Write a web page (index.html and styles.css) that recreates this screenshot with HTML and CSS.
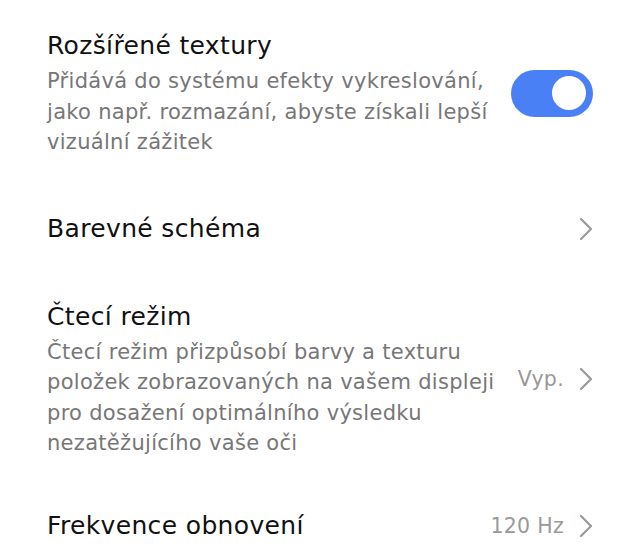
FILE: index.html
```html
<!DOCTYPE html>
<html lang="cs">
<head>
    <meta charset="UTF-8">
    <meta name="viewport" content="width=device-width, initial-scale=1.0">
    <title>Displej</title>
    <link rel="stylesheet" href="styles.css">
</head>
<body>
    <div class="settings">
        <!-- Rozšířené textury -->
        <div class="item">
            <div class="item-text">
                <div class="item-title">Rozšířené textury</div>
                <div class="item-desc">Přidává do systému efekty vykreslování,<br>jako např. rozmazání, abyste získali lepší<br>vizuální zážitek</div>
            </div>
            <div class="item-side">
                <div class="switch switch-on"><span class="knob"></span></div>
            </div>
        </div>

        <div class="item">
            <div class="item-text">
                <div class="item-title">Barevné schéma</div>
            </div>
            <div class="item-side">
                <svg class="chevron" width="14" height="24" viewBox="0 0 14 24"><path d="M2 2 L12 12 L2 22" /></svg>
            </div>
        </div>

        <div class="item">
            <div class="item-text">
                <div class="item-title">Čtecí režim</div>
                <div class="item-desc">Čtecí režim přizpůsobí barvy a texturu<br>položek zobrazovaných na vašem displeji<br>pro dosažení optimálního výsledku<br>nezatěžujícího vaše oči</div>
            </div>
            <div class="item-side">
                <span class="item-value">Vyp.</span>
                <svg class="chevron" width="14" height="24" viewBox="0 0 14 24"><path d="M2 2 L12 12 L2 22" /></svg>
            </div>
        </div>

        <div class="item item-last">
            <div class="item-text">
                <div class="item-title">Frekvence obnovení</div>
            </div>
            <div class="item-side">
                <span class="item-value">120 Hz</span>
                <svg class="chevron" width="14" height="24" viewBox="0 0 14 24"><path d="M2 2 L12 12 L2 22" /></svg>
            </div>
        </div>
    </div>
</body>
</html>
```

FILE: styles.css
```css
body {
    margin: 0;
    background-color: #fff;
    font-family: "DejaVu Sans", "Noto Sans", sans-serif;
    color: #111;
}
.settings {
    display: flex;
    flex-direction: column;
    padding-top: 2px;
}
.item {
    display: flex;
    align-items: center;
    justify-content: space-between;
    padding: 27px 47px 27px 47px;
}
.item-last {
    padding-top: 23px;
}
.item-title {
    font-size: 25px;
    line-height: 34px;
    letter-spacing: 0.35px;
    color: #111;
}
.item-desc {
    margin-top: 3px;
    font-size: 21px;
    line-height: 30.5px;
    letter-spacing: 0.3px;
    color: #777;
}
.item-side {
    display: flex;
    align-items: center;
    gap: 15px;
}
.item-value {
    font-size: 20.5px;
    letter-spacing: 0.3px;
    color: #999;
}
.chevron path {
    fill: none;
    stroke: #999;
    stroke-width: 2.2;
    stroke-linecap: round;
    stroke-linejoin: round;
}
.switch {
    width: 82px;
    height: 47px;
    border-radius: 24px;
    background-color: #4a80f5;
    display: flex;
    align-items: center;
    justify-content: flex-end;
    padding: 0 7px;
    box-sizing: border-box;
}
.knob {
    width: 34px;
    height: 34px;
    border-radius: 50%;
    background-color: #fff;
}
```
